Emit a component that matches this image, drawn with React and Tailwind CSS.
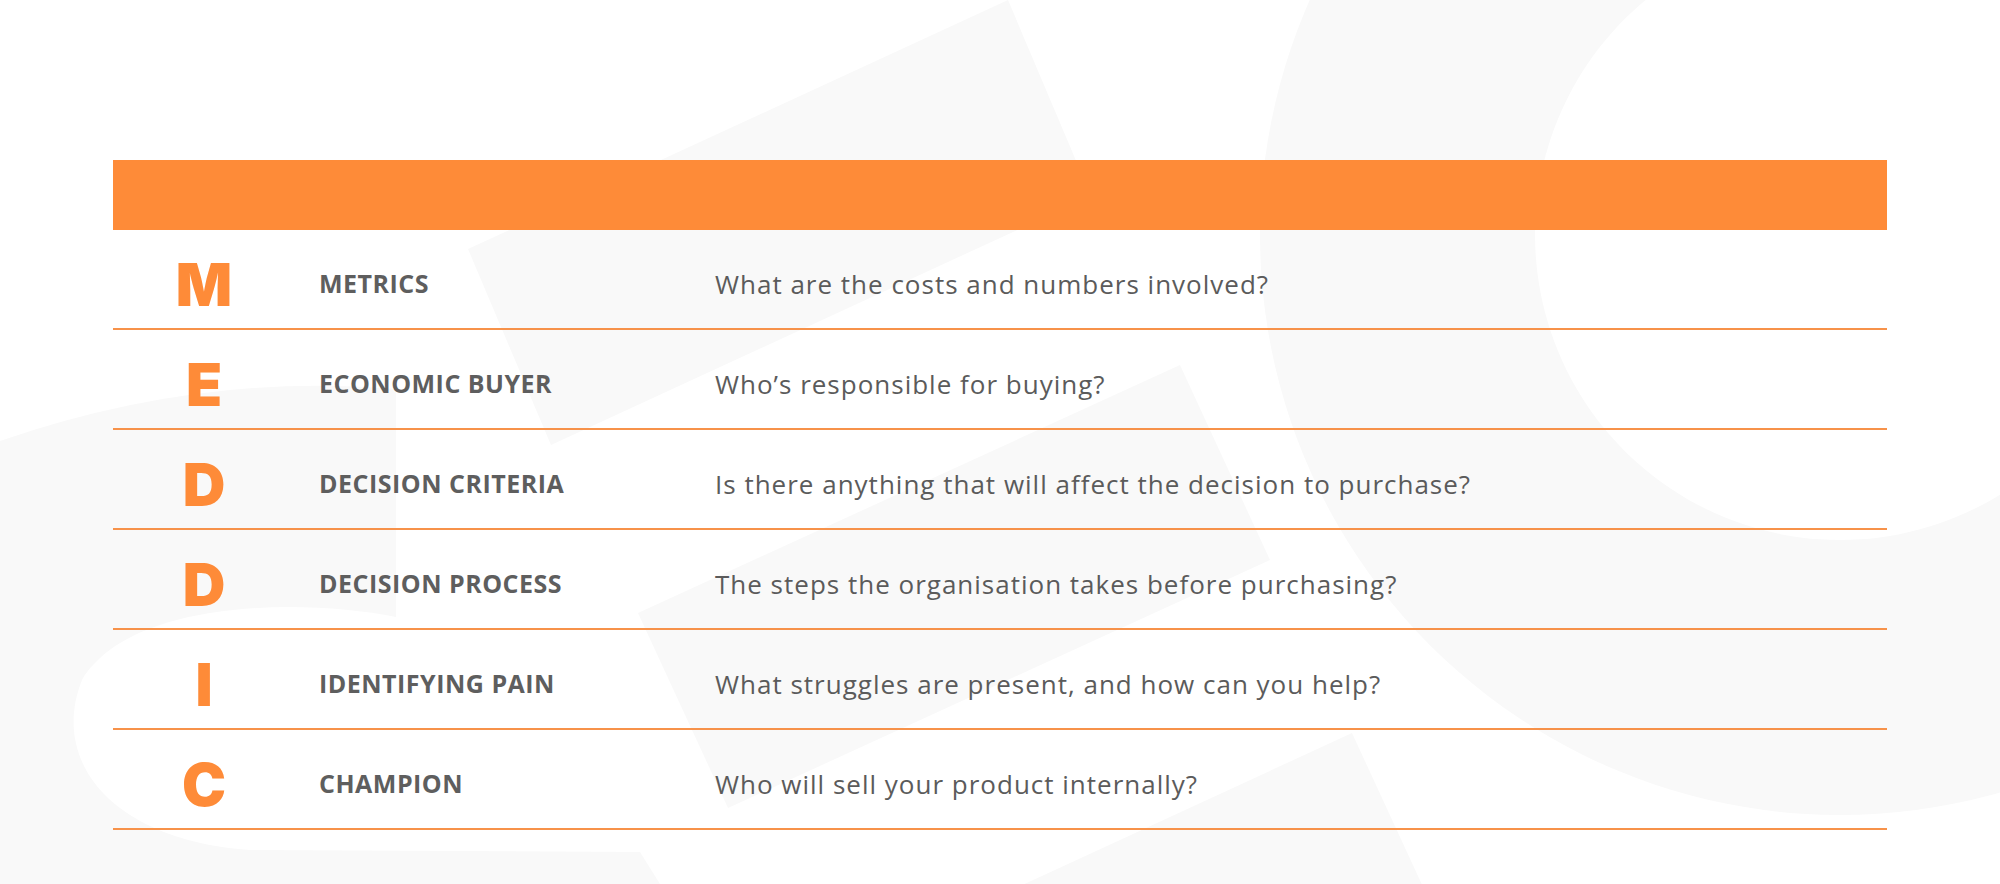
// MEDDIC qualification table: orange header band, one row per letter,
// faint grey logo shapes drawn behind the content.

const ROWS = [
  { letter: 'M', label: 'METRICS', text: 'What are the costs and numbers involved?' },
  { letter: 'E', label: 'ECONOMIC BUYER', text: 'Who’s responsible for buying?' },
  { letter: 'D', label: 'DECISION CRITERIA', text: 'Is there anything that will affect the decision to purchase?' },
  { letter: 'D', label: 'DECISION PROCESS', text: 'The steps the organisation takes before purchasing?' },
  { letter: 'I', label: 'IDENTIFYING PAIN', text: 'What struggles are present, and how can you help?' },
  { letter: 'C', label: 'CHAMPION', text: 'Who will sell your product internally?' },
];

function Backdrop() {
  return (
    <svg
      className="absolute inset-0 h-full w-full"
      viewBox="0 0 2000 884"
      preserveAspectRatio="none"
      aria-hidden="true"
    >
      <g fill="#f9f9f9">
        {/* big ring on the right */}
        <path
          fillRule="evenodd"
          d="M1840 -345 a580 580 0 1 0 0.1 0 Z M1840 -70 a305 305 0 1 0 0.1 0 Z"
        />
        {/* three tilted bars */}
        <polygon points="468,249 1008,0 1091,196 551,445" />
        <polygon points="638,613 1180,365 1270,560 728,808" />
        <polygon points="812,982 1352,733 1442,928 902,1177" />
        {/* C shape on the left */}
        <path d="M0 441 Q200 372 396 389 L396 617 C300 598 130 600 82 680 C50 760 110 840 250 850 L640 852 L660 884 L0 884 Z" />
      </g>
    </svg>
  );
}

export default function App() {
  return (
    <div className="relative h-[884px] w-full overflow-hidden bg-white">
      <Backdrop />

      <div className="relative px-[113px] pt-[160px]">
        <div className="h-[70px] bg-[#fe8b38]" />

        {ROWS.map((row, i) => (
          <div
            key={i}
            className="flex h-[100px] items-center border-b-2 border-[#f7924a] pt-[10px]"
          >
            <div className="w-[182px] text-center font-['Inter',sans-serif] text-[59px] font-black leading-none text-[#fe8b38]">
              {row.letter}
            </div>
            <div className="ml-[24px] w-[396px] font-['Open_Sans',sans-serif] text-[25px] font-bold tracking-[0.5px] text-[#5e5e5e]">
              {row.label}
            </div>
            <div className="flex-1 font-['Open_Sans',sans-serif] text-[26px] tracking-[1px] text-[#5b5b5b]">
              {row.text}
            </div>
          </div>
        ))}
      </div>
    </div>
  );
}
